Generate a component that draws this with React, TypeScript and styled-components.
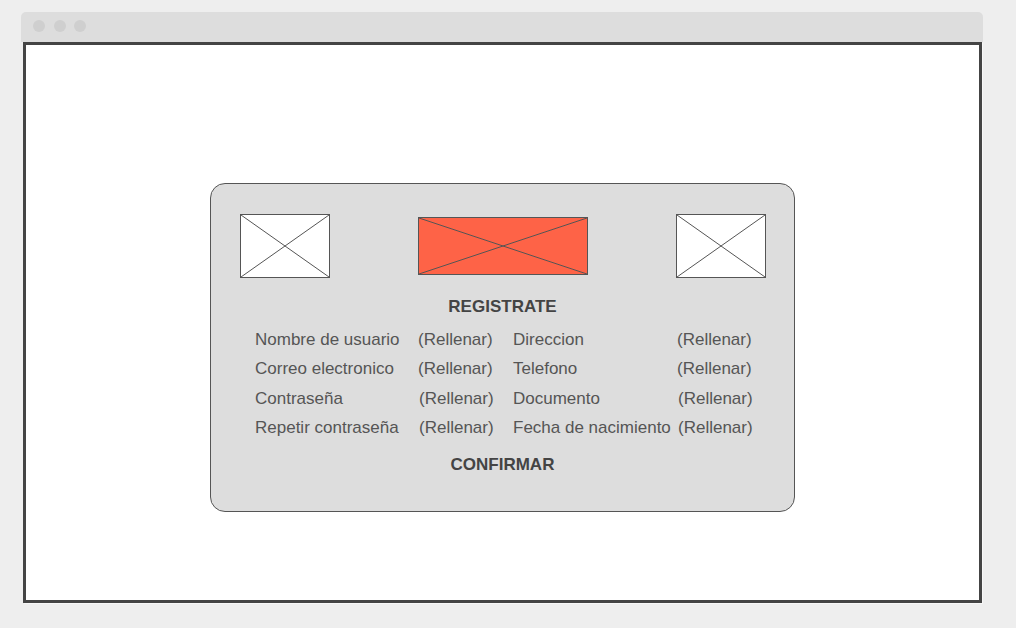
import React from "react";
import styled, { createGlobalStyle } from "styled-components";

const GlobalStyle = createGlobalStyle`
  html, body {
    margin: 0;
    padding: 0;
    background: #eeeeee;
    font-family: "Liberation Sans", Arial, sans-serif;
  }
`;

const Page = styled.div`
  padding: 12px 0 0 21px;
  width: 1016px;
  height: 628px;
  box-sizing: border-box;
`;

const Window = styled.div`
  width: 962px;
  display: flex;
  flex-direction: column;
`;

const TitleBar = styled.div`
  height: 30px;
  background: #dddddd;
  border-radius: 5px 5px 0 0;
  display: flex;
  align-items: center;
  gap: 8.5px;
  padding-left: 12px;
  padding-bottom: 3px;
  box-sizing: border-box;
`;

const Dot = styled.span`
  width: 12px;
  height: 12px;
  border-radius: 50%;
  background: #cfcfcf;
`;

const Frame = styled.div`
  margin: 0 1px 0 2px;
  height: 561px;
  box-sizing: border-box;
  border: 3px solid #444444;
  background: #ffffff;
  box-shadow: 1px 1px 0 #f7f7f7;
  display: flex;
  justify-content: center;
  align-items: flex-start;
  padding-top: 138px;
`;

const Card = styled.div`
  width: 585px;
  height: 329px;
  box-sizing: border-box;
  border: 1px solid #555555;
  border-radius: 15px;
  background: #dddddd;
  padding-top: 30px;
  display: flex;
  flex-direction: column;
`;

const ImageRow = styled.div`
  display: flex;
  justify-content: space-between;
  align-items: center;
  height: 64px;
  padding: 0 28px 0 29px;
`;

const PlaceholderBox = styled.div<{ $w: number; $h: number; $fill: string }>`
  width: ${(p) => p.$w}px;
  height: ${(p) => p.$h}px;
  box-sizing: border-box;
  border: 1px solid #555555;
  background: ${(p) => p.$fill};
  display: flex;
  svg {
    width: 100%;
    height: 100%;
    display: block;
  }
`;

const Placeholder: React.FC<{ w: number; h: number; fill: string }> = ({ w, h, fill }) => (
  <PlaceholderBox $w={w} $h={h} $fill={fill}>
    <svg viewBox="0 0 100 100" preserveAspectRatio="none">
      <line x1="0" y1="0" x2="100" y2="100" stroke="#555" strokeWidth="1" vectorEffect="non-scaling-stroke" />
      <line x1="100" y1="0" x2="0" y2="100" stroke="#555" strokeWidth="1" vectorEffect="non-scaling-stroke" />
    </svg>
  </PlaceholderBox>
);

const Heading = styled.div<{ $top: number }>`
  margin-top: ${(p) => p.$top}px;
  text-align: center;
  font-size: 17px;
  line-height: 20px;
  font-weight: bold;
  color: #444444;
`;

const FieldGrid = styled.div`
  margin-top: 7.5px;
  padding-left: 44px;
  display: grid;
  grid-template-columns: 163px 95px 164px auto;
  grid-auto-rows: 29.5px;
  font-size: 17px;
  line-height: 29.5px;
  color: #555555;
`;

const Cell = styled.span<{ $shift?: number }>`
  white-space: nowrap;
  padding-left: ${(p) => p.$shift ?? 0}px;
`;

const rows: [string, string, string, string, number][] = [
  ["Nombre de usuario", "(Rellenar)", "Direccion", "(Rellenar)", 0],
  ["Correo electronico", "(Rellenar)", "Telefono", "(Rellenar)", 0],
  ["Contraseña", "(Rellenar)", "Documento", "(Rellenar)", 1],
  ["Repetir contraseña", "(Rellenar)", "Fecha de nacimiento", "(Rellenar)", 1],
];

export default function App() {
  return (
    <>
      <GlobalStyle />
      <Page>
        <Window>
          <TitleBar>
            <Dot />
            <Dot />
            <Dot />
          </TitleBar>
          <Frame>
            <Card>
              <ImageRow>
                <Placeholder w={90} h={64} fill="#ffffff" />
                <Placeholder w={170} h={58} fill="#fe6347" />
                <Placeholder w={90} h={64} fill="#ffffff" />
              </ImageRow>
              <Heading $top={19}>REGISTRATE</Heading>
              <FieldGrid>
                {rows.map(([a, b, c, d, s]) => (
                  <React.Fragment key={a}>
                    <Cell>{a}</Cell>
                    <Cell $shift={s}>{b}</Cell>
                    <Cell>{c}</Cell>
                    <Cell $shift={s}>{d}</Cell>
                  </React.Fragment>
                ))}
              </FieldGrid>
              <Heading $top={12}>CONFIRMAR</Heading>
            </Card>
          </Frame>
        </Window>
      </Page>
    </>
  );
}
